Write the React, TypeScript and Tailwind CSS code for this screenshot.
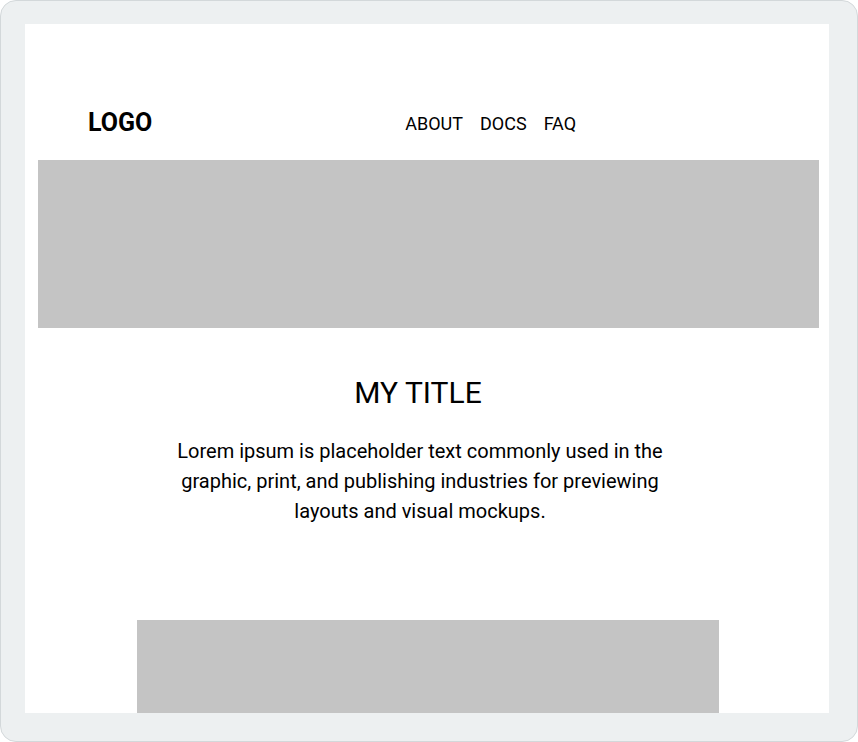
export default function App() {
  return (
    <div className="w-[858px] h-[742px] bg-white" style={{ fontFamily: "Roboto, 'Liberation Sans', sans-serif" }}>
      <div className="w-[858px] h-[742px] rounded-[16px] border border-[#d3d8da] bg-[#edf0f1] pt-[23px] pl-[24px] pr-[28px] pb-[28px] box-border">
        <div className="w-[804px] h-[689px] bg-white overflow-hidden flex flex-col text-black">
          <div className="h-[136px] pt-[60px] flex items-center shrink-0">
            <div className="h-[76px] w-full flex items-center">
              <div className="ml-[63px] text-[25px] font-bold leading-none">LOGO</div>
              <nav className="ml-[253px] pt-[4px] flex gap-[17px] text-[18px] leading-none">
                <span>ABOUT</span>
                <span>DOCS</span>
                <span>FAQ</span>
              </nav>
            </div>
          </div>
          <div className="ml-[13px] w-[781px] h-[168px] bg-[#c4c4c4] shrink-0" />
          <h1 className="mt-[47px] pr-[18px] text-center text-[30px] leading-[36px] font-normal shrink-0">MY TITLE</h1>
          <p className="mt-[25px] ml-[135px] w-[520px] text-center text-[20px] leading-[30px] shrink-0">
            Lorem ipsum is placeholder text commonly used in the graphic, print, and publishing industries for previewing layouts and visual mockups.
          </p>
          <div className="mt-[94px] ml-[112px] w-[582px] h-[120px] bg-[#c4c4c4] shrink-0" />
        </div>
      </div>
    </div>
  );
}
